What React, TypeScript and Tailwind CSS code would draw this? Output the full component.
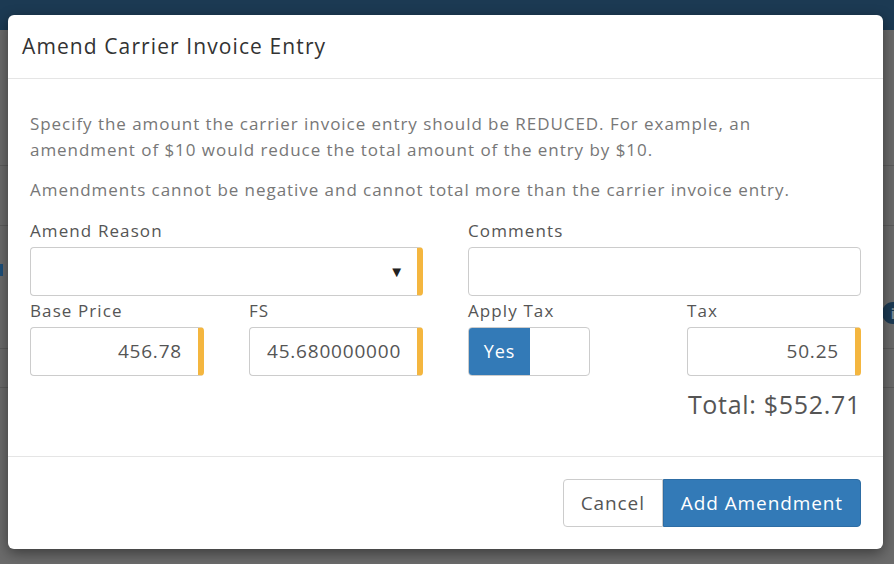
import { useState } from "react"

const font = { fontFamily: '"Open Sans", "Liberation Sans", sans-serif' }

function Field({ label, children, className = "" }: { label: string; children: React.ReactNode; className?: string }) {
  return (
    <div className={className}>
      <div className="mb-[4px] h-[24px] text-[17px] leading-[24px] tracking-[1.1px] text-[#555]">{label}</div>
      {children}
    </div>
  )
}

function RequiredBox({ children, className = "" }: { children?: React.ReactNode; className?: string }) {
  return (
    <div
      className={`flex h-[49px] items-center overflow-hidden rounded-[4px] border border-r-[6px] border-[#ccc] border-r-[#f4b63f] bg-white text-[19px] tracking-[0.8px] text-[#555] ${className}`}
    >
      {children}
    </div>
  )
}

export default function App() {
  const [applyTax, setApplyTax] = useState(true)

  return (
    <div className="relative h-[564px] w-[894px] overflow-hidden bg-[#6b6b6b]" style={font}>
      {/* page behind the overlay */}
      <div className="h-[30px] bg-[#1c3a53]" />
      <div className="mt-[135px] h-px bg-[#5c5c5c]" />
      <div className="mt-[59px] h-px bg-[#5c5c5c]" />
      <div className="mt-[122px] h-px bg-[#5c5c5c]" />
      <div className="mt-[38px] h-px bg-[#5c5c5c]" />
      <div className="absolute left-0 top-[264px] h-[12px] w-[3px] bg-[#1d4f7a]" />
      <div className="absolute left-[882px] top-[302px] flex h-[22px] w-[22px] items-center justify-center rounded-full bg-[#1c3a53] text-[14px] font-bold text-[#7d8b97]">
        i
      </div>

      {/* modal */}
      <div className="absolute left-[8px] top-[15px] w-[875px] rounded-[6px] bg-white shadow-[0_4px_14px_rgba(0,0,0,0.45)]">
        <div className="flex h-[64px] items-center border-b border-[#e5e5e5] px-[14px]">
          <h4 className="text-[21px] tracking-[1.1px] text-[#333]">Amend Carrier Invoice Entry</h4>
        </div>

        <div className="px-[22px] pt-[32px] pb-[36px]">
          <p className="text-[17px] leading-[26px] tracking-[0.95px] text-[#777]">
            Specify the amount the carrier invoice entry should be REDUCED. For example, an
            <br />
            amendment of $10 would reduce the total amount of the entry by $10.
          </p>
          <p className="mt-[14px] text-[17px] leading-[26px] tracking-[0.95px] text-[#777]">
            Amendments cannot be negative and cannot total more than the carrier invoice entry.
          </p>

          <div className="mt-[16px] grid grid-cols-[174px_174px_174px_174px] gap-x-[45px] gap-y-[3px]">
            <Field label="Amend Reason" className="col-span-2">
              <RequiredBox className="justify-end pr-[12px]">
                <span className="text-[15px] text-[#222]">▼</span>
              </RequiredBox>
            </Field>
            <Field label="Comments" className="col-span-2">
              <div className="h-[49px] rounded-[4px] border border-[#ccc] bg-white" />
            </Field>

            <Field label="Base Price">
              <RequiredBox className="justify-end pr-[16px]">456.78</RequiredBox>
            </Field>
            <Field label="FS">
              <RequiredBox className="pl-[17px] whitespace-nowrap">45.680000000</RequiredBox>
            </Field>
            <Field label="Apply Tax">
              <button
                onClick={() => setApplyTax(!applyTax)}
                className="flex h-[49px] w-[122px] overflow-hidden rounded-[4px] border border-[#ccc] bg-white"
              >
                <span
                  className={`flex h-full w-[61px] items-center justify-center text-[18px] tracking-[1px] text-white ${
                    applyTax ? "bg-[#337ab7]" : "bg-transparent"
                  }`}
                >
                  {applyTax ? "Yes" : ""}
                </span>
              </button>
            </Field>
            <Field label="Tax">
              <RequiredBox className="justify-end pr-[16px]">50.25</RequiredBox>
            </Field>
          </div>

          <div className="mt-[12px] text-right text-[25px] leading-[32px] tracking-[0.7px] text-[#555]">
            Total: $552.71
          </div>
        </div>

        <div className="flex justify-end border-t border-[#e5e5e5] px-[22px] pt-[22px] pb-[22px]">
          <button className="h-[48px] rounded-l-[4px] border border-[#ccc] bg-white px-[17px] text-[19px] tracking-[0.9px] text-[#555]">
            Cancel
          </button>
          <button className="h-[48px] rounded-r-[4px] border border-[#2e6da4] bg-[#337ab7] px-[17px] text-[19px] tracking-[0.9px] text-white">
            Add Amendment
          </button>
        </div>
      </div>
    </div>
  )
}
